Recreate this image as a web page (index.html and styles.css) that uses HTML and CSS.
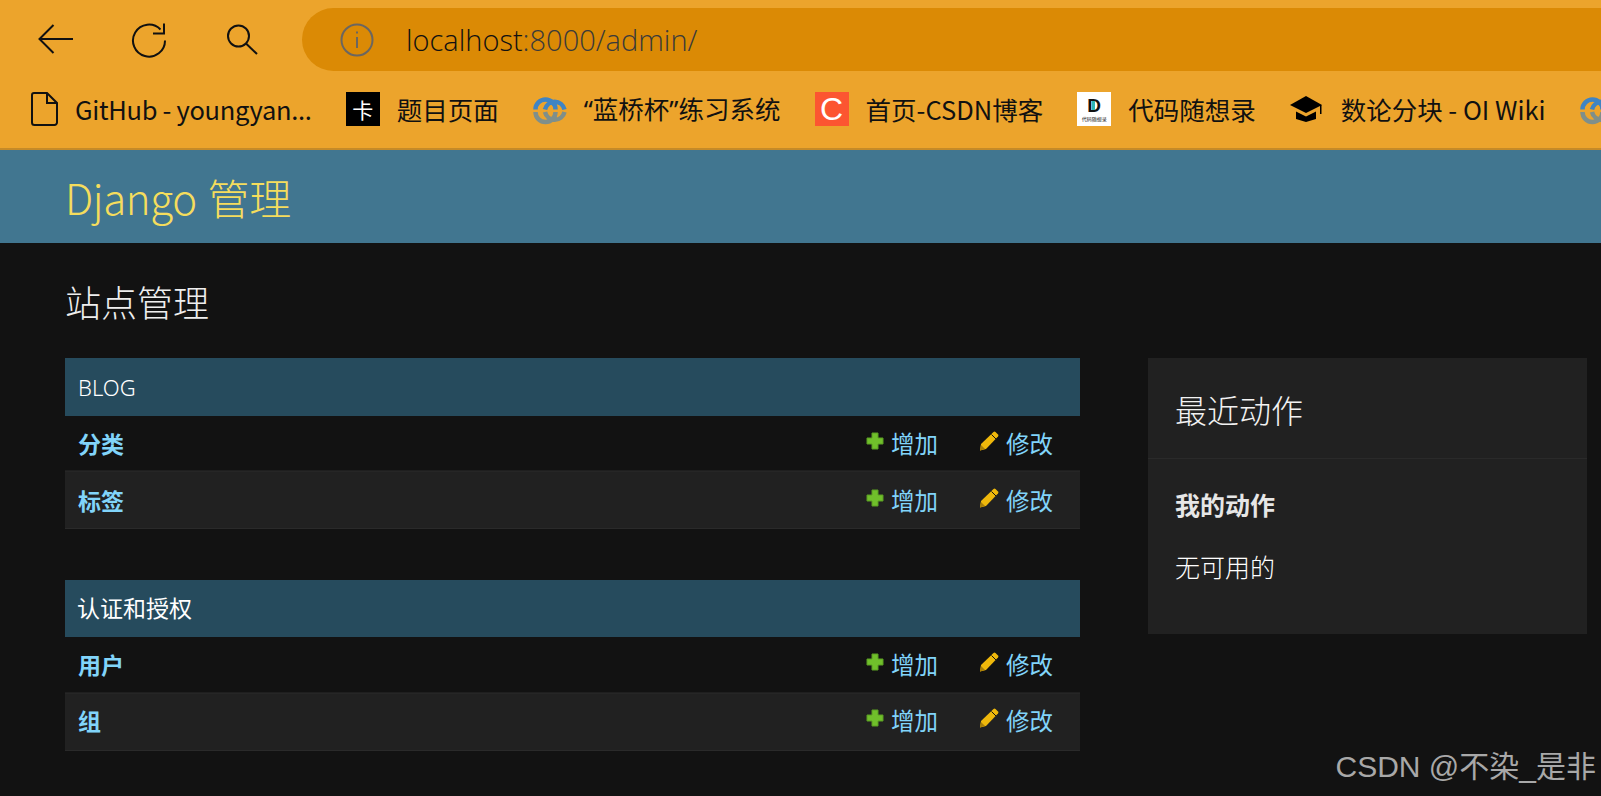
FILE: index.html
```html
<!DOCTYPE html>
<html lang="zh-CN">
<head>
<meta charset="utf-8">
<title>站点管理</title>
<link rel="stylesheet" href="styles.css">
</head>
<body>
<div class="browser">
  <div class="toolbar">
    <svg class="tool back" viewBox="0 0 36 32"><path d="M35 15H2M15.500 1 1.500 15 15.500 29"/></svg>
    <svg class="tool reload" viewBox="0 0 36 36"><path d="M29.500 7.500A16 16 0 1 0 34 18.500M33 1.500V11.500H22"/></svg>
    <svg class="tool search" viewBox="0 0 31 31"><circle cx="11.500" cy="12" r="10.500"/><path d="m19 19.500 11 10.500"/></svg>
    <div class="address">
      <svg class="info" viewBox="0 0 36 36"><circle cx="18" cy="18" r="15.500"/><path d="M18 15v11M18 9.500v2"/></svg>
      <span class="url"><span class="host">localhost</span>:8000/admin/</span>
    </div>
  </div>
  <div class="bookmarks">
    <div class="bm">
      <svg class="fav doc" viewBox="0 0 27 34"><path d="M3 1h13l10 10v19.500a2.500 2.500 0 0 1-2.500 2.500h-20A2.500 2.500 0 0 1 1 30.500V3a2 2 0 0 1 2-2ZM16 1v10h10"/></svg>
      <span class="bm-text tight">GitHub - youngyan...</span>
    </div>
    <div class="bm">
      <span class="fav square black">卡</span>
      <span class="bm-text">题目页面</span>
    </div>
    <div class="bm">
      <svg class="fav" viewBox="0 0 34 34"><path d="M2.500 17.500a10 10 0 0 1 20 0M12 17.500a10 10 0 0 1 19.500 0" class="ring-top"/><path d="M2.500 20a10 10 0 0 0 20 0M12 20a10 10 0 0 0 19.500 0" class="ring-bottom"/></svg>
      <span class="bm-text"><span class="q">“</span>蓝桥杯<span class="q">”</span>练习系统</span>
    </div>
    <div class="bm">
      <span class="fav square red">C</span>
      <span class="bm-text">首页-CSDN博客</span>
    </div>
    <div class="bm">
      <span class="fav square white"><span class="dm">D</span><span class="dm-small">代码随想录</span></span>
      <span class="bm-text">代码随想录</span>
    </div>
    <div class="bm">
      <svg class="fav" viewBox="0 0 34 34"><path d="M16 4 32 13 16 21 0 13Z" class="cap"/><path d="M6 19.500v7.500l10 3 10-3v-7.500l-10 5Z" class="cap"/><path d="M30 13h1.500v9H30Z" class="cap"/></svg>
      <span class="bm-text">数论分块 - OI Wiki</span>
    </div>
    <div class="bm bm-last">
      <svg class="fav" viewBox="0 0 34 34"><path d="M2.500 17.500a10 10 0 0 1 20 0M12 17.500a10 10 0 0 1 19.500 0" class="ring-top"/><path d="M2.500 20a10 10 0 0 0 20 0M12 20a10 10 0 0 0 19.500 0" class="ring-bottom"/></svg>
    </div>
  </div>
</div>
<header class="site-header"><span class="brand">Django 管理</span></header>
<main class="content">
  <h1 class="page-title">站点管理</h1>
  <div class="columns">
    <div class="apps">
      <section class="module">
        <div class="module-head latin">BLOG</div>
        <div class="row"><a class="model">分类</a><span class="actions"><span class="add"><svg class="ic" viewBox="0 0 18 18"><path d="M6 1h6v5h5v6h-5v5H6v-5H1V6h5Z" class="plus"/></svg>增加</span><span class="edit"><svg class="ic" viewBox="0 0 20 20"><path d="M14.500 1a1.500 1.500 0 0 1 2 0L19 3.500a1.500 1.500 0 0 1 0 2L7 18l-6 1.500L2 13Z" class="pencil"/><path d="M12.500 3.500l4.500 4.500" class="pencil-line"/><path d="M2 14 6 18l-5 1.500Z" class="pencil-tip"/></svg>修改</span></span></div>
        <div class="row alt"><a class="model">标签</a><span class="actions"><span class="add"><svg class="ic" viewBox="0 0 18 18"><path d="M6 1h6v5h5v6h-5v5H6v-5H1V6h5Z" class="plus"/></svg>增加</span><span class="edit"><svg class="ic" viewBox="0 0 20 20"><path d="M14.500 1a1.500 1.500 0 0 1 2 0L19 3.500a1.500 1.500 0 0 1 0 2L7 18l-6 1.500L2 13Z" class="pencil"/><path d="M12.500 3.500l4.500 4.500" class="pencil-line"/><path d="M2 14 6 18l-5 1.500Z" class="pencil-tip"/></svg>修改</span></span></div>
      </section>
      <section class="module module-auth">
        <div class="module-head">认证和授权</div>
        <div class="row"><a class="model">用户</a><span class="actions"><span class="add"><svg class="ic" viewBox="0 0 18 18"><path d="M6 1h6v5h5v6h-5v5H6v-5H1V6h5Z" class="plus"/></svg>增加</span><span class="edit"><svg class="ic" viewBox="0 0 20 20"><path d="M14.500 1a1.500 1.500 0 0 1 2 0L19 3.500a1.500 1.500 0 0 1 0 2L7 18l-6 1.500L2 13Z" class="pencil"/><path d="M12.500 3.500l4.500 4.500" class="pencil-line"/><path d="M2 14 6 18l-5 1.500Z" class="pencil-tip"/></svg>修改</span></span></div>
        <div class="row alt"><a class="model">组</a><span class="actions"><span class="add"><svg class="ic" viewBox="0 0 18 18"><path d="M6 1h6v5h5v6h-5v5H6v-5H1V6h5Z" class="plus"/></svg>增加</span><span class="edit"><svg class="ic" viewBox="0 0 20 20"><path d="M14.500 1a1.500 1.500 0 0 1 2 0L19 3.500a1.500 1.500 0 0 1 0 2L7 18l-6 1.500L2 13Z" class="pencil"/><path d="M12.500 3.500l4.500 4.500" class="pencil-line"/><path d="M2 14 6 18l-5 1.500Z" class="pencil-tip"/></svg>修改</span></span></div>
      </section>
    </div>
    <aside class="recent">
      <h2 class="recent-title">最近动作</h2>
      <div class="recent-body">
        <h3 class="recent-sub">我的动作</h3>
        <p class="recent-none">无可用的</p>
      </div>
    </aside>
  </div>
</main>
<div class="watermark">CSDN @不染_是非</div>
</body>
</html>
```
FILE: styles.css
```css
* { box-sizing: border-box; }
html, body { margin: 0; padding: 0; }
body {
  width: 1601px;
  height: 796px;
  overflow: hidden;
  position: relative;
  background: #121212;
  color: #eeeeee;
  font-family: "Noto Sans", "Noto Sans CJK SC", sans-serif;
}
.browser {
  height: 150px;
  background: #eca42c;
  border-bottom: 2px solid #c58a28;
}
.toolbar {
  height: 71px;
  padding-top: 8px;
  display: flex;
  align-items: center;
}
.tool { fill: none; stroke: #111; stroke-width: 2; flex: none; }
.back { width: 36px; height: 32px; margin-left: 38px; }
.reload { width: 36px; height: 36px; margin-left: 57px; }
.search { width: 31px; height: 31px; margin-left: 60px; }
.address {
  margin-left: 44px;
  flex: 1;
  height: 63px;
  background: #db8a05;
  border-radius: 32px 0 0 32px;
  display: flex;
  align-items: center;
  padding-left: 37px;
}
.info { width: 36px; height: 36px; fill: none; stroke: #6b6660; stroke-width: 2; flex: none; }
.url {
  margin-left: 31px;
  font-size: 29px;
  font-weight: 300;
  color: #3a3a3a;
  font-family: "Open Sans", "Noto Sans", sans-serif;
}
.host { color: #111; }
.bookmarks {
  height: 77px;
  display: flex;
  align-items: center;
  padding-left: 31px;
  padding-bottom: 2px;
  white-space: nowrap;
  overflow: hidden;
}
.bm { display: flex; align-items: center; margin-right: 34px; flex: none; }
.bm-last { margin-right: 0; }
.bm-text {
  margin-left: 17px;
  font-family: "Noto Sans CJK SC", "Noto Sans", sans-serif;
  font-size: 25.500px;
  line-height: 34px;
  color: #111;
  font-weight: 400;
}
.tight { letter-spacing: -0.300px; }
.q { font-family: "Noto Sans", sans-serif; }
.fav { width: 34px; height: 34px; flex: none; display: block; }
.doc { width: 27px; fill: none; stroke: #111; stroke-width: 2; }
.square {
  display: flex;
  align-items: center;
  justify-content: center;
}
.black { background: #000; color: #fff; font-size: 21px; }
.red { background: #fc5531; color: #fff; font-size: 32px; font-family: "Liberation Sans", sans-serif; line-height: 1; }
.white { background: #fff; color: #111; flex-direction: column; }
.dm { position: relative; font-size: 19px; line-height: 21px; font-weight: 700; font-family: "Liberation Sans", sans-serif; }
.dm::after {
  content: "";
  position: absolute;
  left: 5px;
  top: 6px;
  width: 3px;
  height: 9px;
  background: #2fb5b5;
}
.dm-small { font-size: 5px; line-height: 7px; }
.ring-top { fill: none; stroke: #3f84c4; stroke-width: 4.500; }
.ring-bottom { fill: none; stroke: #7f8f8a; stroke-width: 4.500; }
.cap { fill: #000; }

.site-header {
  height: 93px;
  background: #417690;
  padding-left: 65px;
  display: flex;
  align-items: center;
}
.brand {
  color: #f5dd5d;
  font-family: "Noto Sans CJK SC", sans-serif;
  font-size: 42px;
  font-weight: 300;
  line-height: 1;
  letter-spacing: -0.400px;
  word-spacing: 2px;
}
.content { padding: 0 14px 0 65px; }
.page-title {
  margin: 0;
  height: 115px;
  padding-top: 36px;
  font-size: 36px;
  line-height: 50px;
  font-weight: 300;
  color: #eeeeee;
}
.columns { display: flex; align-items: flex-start; gap: 68px; }
.apps { width: 1015px; flex: none; }
.module { margin-bottom: 51px; }
.module-head {
  height: 58px;
  background: #264b5d;
  padding-left: 13px;
  display: flex;
  align-items: center;
  font-size: 23px;
  font-weight: 400;
  color: #fff;
}
.module-auth .module-head { height: 57px; padding-bottom: 3px; padding-left: 12px; }
.latin { font-weight: 300; font-size: 22px; }
.row {
  height: 55px;
  display: flex;
  align-items: center;
  justify-content: space-between;
  padding: 0 27px 1px 13px;
  border-bottom: 1px solid #1f1f1f;
}
.module-auth .row { height: 56px; }
.row.alt,
.module-auth .row.alt { height: 58px; background: #212121; border-bottom: 1px solid #2a2a2a; border-top: 1px solid #262626; }
.module-auth .row.alt { padding-bottom: 4px; }
.model { color: #81d4fa; font-size: 23px; font-weight: 700; }
.actions { display: flex; align-items: center; font-size: 23.500px; color: #81d4fa; }
.add, .edit { display: flex; align-items: center; }
.edit { margin-left: 41px; }
.ic { flex: none; margin-right: 7px; }
.add .ic { width: 18px; height: 18px; margin-top: -4px; }
.edit .ic { width: 20px; height: 20px; margin-top: -4px; }
.plus { fill: #70bf2b; stroke: #5b9e22; stroke-width: 1; stroke-linejoin: round; }
.pencil { fill: #efb80b; }
.pencil-line { stroke: #121212; stroke-width: 1; fill: none; }
.pencil-tip { fill: #a87e08; }
.recent { width: 439px; height: 276px; background: #212121; flex: none; }
.recent-title {
  margin: 0;
  height: 101px;
  padding: 2px 0 0 27px;
  display: flex;
  align-items: center;
  font-size: 32px;
  font-weight: 300;
  color: #f2f2f2;
  border-bottom: 1px solid #2a2a2a;
}
.recent-body { padding: 28px 27px 0; }
.recent-sub { margin: 0; font-size: 25px; line-height: 36px; font-weight: 700; color: #e6e6e6; }
.recent-none { margin: 26px 0 0; font-size: 25px; line-height: 36px; font-weight: 300; color: #ffffff; }
.watermark {
  position: absolute;
  right: 5px;
  bottom: 10px;
  font-family: "Liberation Sans", "Noto Sans CJK SC", sans-serif;
  font-size: 30px;
  color: #a8a8a8;
}
```
